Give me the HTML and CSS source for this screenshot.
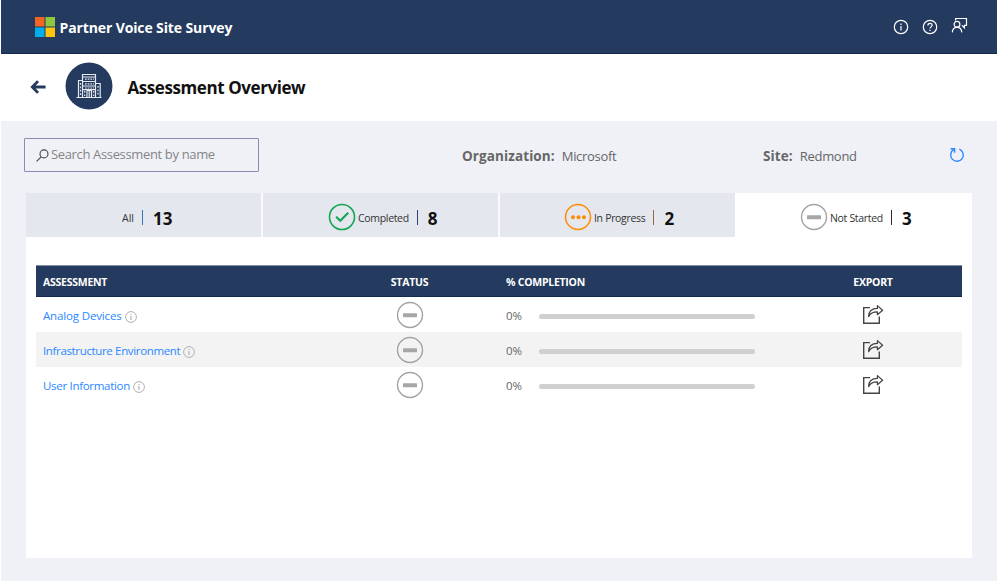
FILE: index.html
```html
<!DOCTYPE html>
<html lang="en">
<head>
<meta charset="utf-8">
<title>Partner Voice Site Survey</title>
<link rel="stylesheet" href="styles.css">
</head>
<body>
<svg class="defs" aria-hidden="true">
  <symbol id="minus" viewBox="0 0 28 28"><circle cx="14" cy="14" r="12.5" fill="none" stroke="#a3a3a3" stroke-width="1.4"/><rect x="7" y="12.2" width="14" height="4" rx=".6" fill="#a6a6a6"/></symbol>
  <symbol id="info" viewBox="0 0 12 12"><circle cx="6" cy="6" r="5.4" fill="none" stroke="#b0b0b0"/><path d="M6 5v4M6 3v1.1" stroke="#aaa" stroke-width="1.1"/></symbol>
  <symbol id="export" viewBox="0 0 22 22"><path d="M8 3.6H1.7V19.2H17.3V12.5" fill="none" stroke="#444" stroke-width="1.4"/><path d="M6.6 12.6C6.7 7 10 4.4 15.4 4.4V1.6L20.6 6.2L15.4 10.7V7.9C11 7.9 8.3 9.2 6.6 12.6Z" fill="none" stroke="#444" stroke-width="1.25" stroke-linejoin="round"/></symbol>
</svg>
<div class="page">
  <header class="topbar">
    <svg class="logo" viewBox="0 0 20 20"><path fill="#f26522" d="M0 0h9.5v9.5H0z"/><path fill="#8dc63f" d="M10.5 0H20v9.5h-9.5z"/><path fill="#00aeef" d="M0 10.5h9.5V20H0z"/><path fill="#ffc20e" d="M10.5 10.5H20V20h-9.5z"/></svg>
    <span class="brand">Partner Voice Site Survey</span>
    <nav class="tools">
      <svg width="16" height="16" viewBox="0 0 16 16" fill="none" stroke="#fff"><circle cx="8" cy="8" r="6.7" stroke-width="1.2"/><path d="M8 7v4.5M8 4.5v1.4" stroke-width="1.2"/></svg>
      <svg width="16" height="16" viewBox="0 0 16 16" fill="none" stroke="#fff"><circle cx="8" cy="8" r="6.7" stroke-width="1.2"/><path d="M5.9 6.5C5.9 3.6 10.1 3.7 10.1 6.3C10.1 7.9 8 7.9 8 9.6M8 10.7v1.3" stroke-width="1.2"/></svg>
      <svg class="feedback" width="17" height="17" viewBox="0 0 17 17" fill="none" stroke="#fff" stroke-width="1.2"><path d="M4.6 3.6V1.5H15.5V8.3H13.4V10.8L10.9 8.4"/><circle cx="6" cy="7.2" r="2.9"/><path d="M1.3 15.4C1.8 8.8 10.2 8.8 10.8 15.4"/></svg>
    </nav>
  </header>
  <section class="titlebar">
    <svg class="back" viewBox="0 0 16 14" fill="none" stroke="#243a5e" stroke-width="2.8"><path d="M2 7H15.6M8 1.1L2.3 7L8 12.9"/></svg>
    <svg class="avatar" viewBox="0 0 48 48"><circle cx="24" cy="24" r="23.5" fill="#243a5e"/><g fill="none" stroke="#e5e9ef" stroke-width="1.2"><path d="M11.5 35.5H36.5M17.5 35V12.5H30.5V35M13.5 35V18.5H17M31 21.5H35.2V35M22 35V28.5H26.5V35M24.2 29v6M17.5 15h13M17.5 19.5h13M17.5 24h13M17.5 27.6h13"/><path d="M20 17.2h9M20 21.8h9M20 26h9" stroke-dasharray="1.7 1"/><path d="M15.5 21v12M33 24v9M19.7 29v5M28.7 29v5" stroke-dasharray="1.8 1.6"/></g></svg>
    <h1 class="heading">Assessment Overview</h1>
  </section>
  <main class="content">
    <div class="filters">
      <div class="search">
        <svg class="glass" viewBox="0 0 13 13" fill="none" stroke="#444" stroke-width="1.1"><circle cx="8" cy="4.9" r="4"/><path d="M5.2 7.8L.6 12.3"/></svg>
        <span class="placeholder">Search Assessment by name</span>
      </div>
      <div class="field org"><b class="label">Organization:</b><span class="value">Microsoft</span></div>
      <div class="field site"><b class="label">Site:</b><span class="value">Redmond</span></div>
      <svg class="refresh" viewBox="0 0 16 16" fill="none" stroke="#2b88ff" stroke-width="1.4"><path d="M10.3 2.1A6.3 6.3 0 1 1 5 2.4M1.5 1.7H5.6V5.8"/></svg>
    </div>
    <div class="tabs">
      <div class="tab all"><span class="name">All</span><i class="bar blue"></i><b class="count">13</b></div>
      <div class="tab completed"><svg class="state" viewBox="0 0 28 28" fill="none" stroke="#13a653"><circle cx="14" cy="14" r="12.5" stroke-width="1.6"/><path d="M8.1 13.7L12.3 17.7L20.2 9.8" stroke-width="2.2"/></svg><span class="name">Completed</span><i class="bar navy"></i><b class="count">8</b></div>
      <div class="tab progress"><svg class="state" viewBox="0 0 28 28" fill="#ff8c00"><circle cx="14" cy="14" r="12.5" fill="none" stroke="#ff8c00" stroke-width="1.5"/><circle cx="9" cy="14.3" r="2"/><circle cx="14.5" cy="14.3" r="2"/><circle cx="20" cy="14.3" r="2"/></svg><span class="name">In Progress</span><i class="bar brown"></i><b class="count">2</b></div>
      <div class="tab pending"><svg class="state"><use href="#minus"/></svg><span class="name">Not Started</span><i class="bar"></i><b class="count">3</b></div>
    </div>
    <div class="panel">
      <div class="row head"><span class="th1">ASSESSMENT</span><span class="center"><span class="th2">STATUS</span></span><span class="completion th3">% COMPLETION</span><span class="center"><span class="th4">EXPORT</span></span></div>
      <div class="row"><span class="item"><a class="link l1">Analog Devices</a><svg class="info"><use href="#info"/></svg></span><span class="center"><svg class="state"><use href="#minus"/></svg></span><span class="completion"><span class="pct">0%</span><i class="track"></i></span><span class="center"><svg class="export"><use href="#export"/></svg></span></div>
      <div class="row alt"><span class="item"><a class="link l2">Infrastructure Environment</a><svg class="info"><use href="#info"/></svg></span><span class="center"><svg class="state"><use href="#minus"/></svg></span><span class="completion"><span class="pct">0%</span><i class="track"></i></span><span class="center"><svg class="export"><use href="#export"/></svg></span></div>
      <div class="row"><span class="item"><a class="link l3">User Information</a><svg class="info"><use href="#info"/></svg></span><span class="center"><svg class="state"><use href="#minus"/></svg></span><span class="completion"><span class="pct">0%</span><i class="track"></i></span><span class="center"><svg class="export"><use href="#export"/></svg></span></div>
    </div>
  </main>
</div>
</body>
</html>
```
FILE: styles.css
```css
* { box-sizing: border-box; }
body { margin: 0; background: #fff; font-family: "Open Sans", "Noto Sans", sans-serif; color: #111; overflow: hidden; }
svg { display: block; flex: none; }
span, b, h1, a { white-space: nowrap; }
.defs { position: absolute; width: 0; height: 0; }
.page { width: 996px; height: 581px; margin-left: 1px; display: flex; flex-direction: column; background: #f0f1f7; }
.topbar { height: 54px; background: #243a5e; border-bottom: 1px solid #12294d; display: flex; align-items: center; padding: 1px 29px 0 34px; }
.logo { width: 20px; height: 20px; }
.brand { margin-left: 4.5px; font-size: 14px; font-weight: 700; color: #fff; letter-spacing: -.12px; }
.tools { margin-left: auto; display: flex; gap: 13px; align-items: center; }
.feedback { margin-top: -4px; }
.titlebar { height: 67px; background: #fff; display: flex; align-items: center; padding: 0 0 3px 29px; }
.back { width: 16px; height: 14px; margin-top: 1px; }
.avatar { width: 48px; height: 48px; margin-left: 19px; }
.heading { margin: 3px 0 0 14.5px; font-size: 17px; font-weight: 700; letter-spacing: -.42px; }
.content { padding: 17px 25px 0 23px; }
.filters { height: 34px; display: flex; align-items: center; }
.search { width: 235px; height: 34px; border: 1px solid #8d89b3; border-radius: 1px; display: flex; align-items: center; padding-left: 11px; }
.glass { width: 13px; height: 13px; }
.placeholder { margin: -2px 0 0 2px; font-size: 13px; color: #858585; letter-spacing: -.35px; }
.field { display: flex; align-items: center; font-size: 13px; color: #666; margin-top: 1px; }
.label { font-size: 13.5px; letter-spacing: .1px; }
.org { margin-left: 203px; width: 301px; }
.site { width: 186px; }
.value { margin-left: 7px; letter-spacing: -.3px; }
.refresh { width: 16px; height: 16px; }
.tabs { margin: 21px 0 0 2px; width: 946px; height: 44px; display: grid; grid-template-columns: 237px 237px 235px 237px; background: #fafafc; }
.tab { background: #e4e7ee; display: flex; align-items: center; border-right: 2px solid #fafafc; padding-top: 4px; }
.all { padding-left: 96px; }
.completed { padding-left: 65px; }
.progress { padding-left: 64px; border-right: 0; }
.pending { padding-left: 65px; background: #fff; border-right: 0; }
.state { width: 28px; height: 28px; }
.name { font-size: 10.5px; color: #333; margin: 2px 0 0 2px; letter-spacing: -.32px; }
.all .name { margin-left: 0; letter-spacing: 0; }
.bar { width: 1px; height: 15px; background: #2a2a2a; margin: 0 10px 0 8px; flex: none; }
.blue { background: #3976b5; }
.navy { background: #35407a; }
.brown { background: #9c643d; }
.count { font-size: 17px; line-height: 20px; margin-top: 3px; }
.panel { margin-left: 2px; width: 946px; height: 321px; background: #fff; padding: 28px 10px 0; }
.row { display: grid; grid-template-columns: 319px 109px 320px 178px; height: 35px; align-items: center; padding-left: 0; }
.head { height: 32px; background: #243a5e; color: #fff; font-size: 10.5px; font-weight: 700; letter-spacing: -.25px; padding-top: 1px; border-top: 1px solid #8290a5; border-bottom: 1px solid #142b50; }
.th1 { padding-left: 7px; }
.alt { background: #f3f3f3; }
.item { display: flex; align-items: center; padding: 3px 0 0 7px; }
.link { font-size: 11.5px; color: #2b88ff; letter-spacing: -.3px; margin-top: -2px; }
.l1 { letter-spacing: -.15px; }
.l2 { letter-spacing: -.35px; }
.info { width: 12px; height: 12px; margin: 1px 0 0 3px; }
.center { display: flex; justify-content: center; }
.completion { display: flex; align-items: center; padding-left: 42px; }
.pct { font-size: 11.5px; color: #666; width: 33px; margin-top: 1px; }
.track { width: 216px; height: 5px; border-radius: 3px; background: #d0d0d0; margin-top: 4px; }
.export { width: 22px; height: 22px; }
```
